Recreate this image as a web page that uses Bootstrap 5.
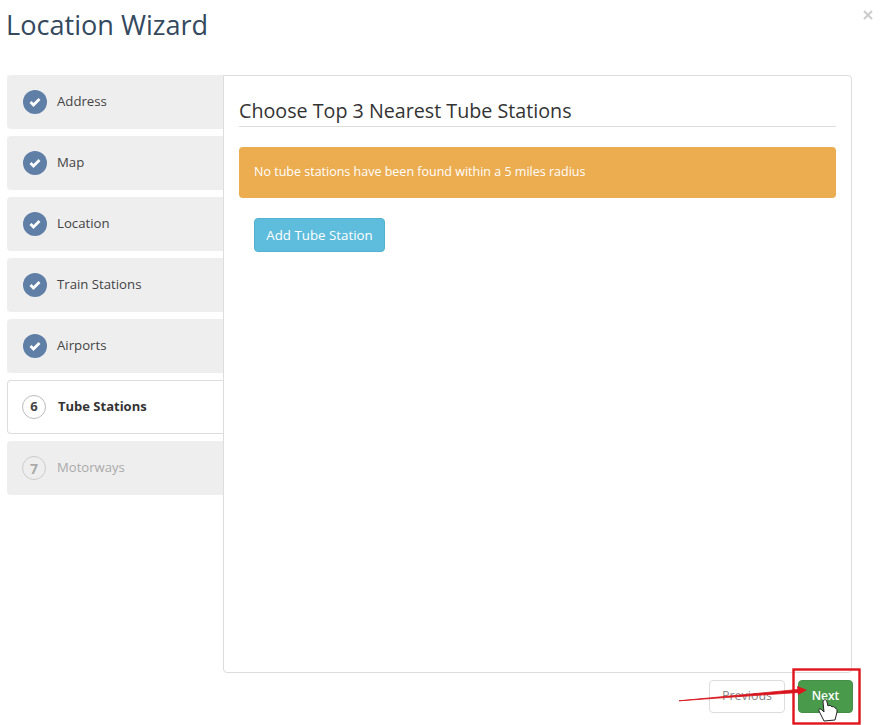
<!DOCTYPE html>
<html lang="en">
<head>
<meta charset="utf-8">
<title>Location Wizard</title>
<link href="https://cdn.jsdelivr.net/npm/bootstrap@5.3.0/dist/css/bootstrap.min.css" rel="stylesheet">
<style>
html,body{height:725px;overflow:hidden;background:#fff}
body{font-family:"Open Sans","Noto Sans",sans-serif;color:#333;font-size:13px;position:relative}
.wiz-page{padding:0 29px 0 7px;width:881px}
.wiz-head{height:75px;padding-top:7px}
.wiz-title{font-size:27.1px;font-weight:400;color:#34495e;margin:0 0 0 -1px;line-height:36px}
.wiz-close{position:absolute;left:862px;top:9px;width:12px;height:12px}
.wiz-body{height:598px}
.wiz-steps{width:216px;flex:none;gap:7px}
.wiz-step{height:54px;background:#eee;border-radius:4px 0 0 4px;padding-left:16px;gap:10px;font-size:13.2px;color:#444}
.wiz-label{padding-bottom:1px}
.wiz-step.is-current{background:#fff;border:1px solid #ddd;border-right:0;font-weight:700;color:#333;padding-left:14px;gap:12px;font-size:13px}
.wiz-step.is-current .wiz-label{padding-bottom:0}
.wiz-step.is-off{color:#aaa;padding-left:15px;gap:11px;font-size:13.1px}
.wiz-dot{width:24px;height:24px;border-radius:50%;background:#5f7fa6;flex:none}
.wiz-num{background:#fff;border:1px solid #bbb;font-size:13px;font-weight:700;color:#444}
.is-off .wiz-num{background:transparent;border-color:#ccc;color:#aaa;font-size:14px}
.wiz-panel{width:629px;flex:none;border:1px solid #ddd;border-radius:0 4px 4px 4px;padding:20px 15px 0}
.wiz-h{font-size:19.7px;font-weight:400;color:#333;margin:0;line-height:30px;border-bottom:1px solid #ddd;height:31px}
.wiz-alert{margin:20px 0 20px;height:51px;background:#ecac50;color:#fff;border:0;border-radius:4px;padding:0 15px 1px;font-size:12.5px}
.wiz-add{margin-left:15px;height:34px;width:131px;background:#5ebcdc;border:1px solid #53b0d0;color:#fff;font-size:13.3px;padding:1px 0 0;border-radius:4px}
.wiz-foot{height:52px;padding-top:7px;gap:13px;margin-right:-1px}
.wiz-prev{width:76px;height:33px;padding:0 0 1px;background:#fff;border:1px solid #ddd;color:#888;font-size:12.5px;border-radius:4px}
.wiz-next{width:55px;height:33px;padding:0 0 1px;background:#4a9a4c;border:1px solid #468f48;color:#fff;font-size:12px;font-weight:600;border-radius:4px}
.wiz-overlay{position:absolute;left:0;top:0;pointer-events:none}
</style>
</head>
<body>
<div class="wiz-page">
  <div class="wiz-head"><h1 class="wiz-title">Location Wizard</h1></div>
  <svg class="wiz-close" viewBox="0 0 12 12"><path d="M2 2l8 8M10 2l-8 8" stroke="#ccc" stroke-width="2"/></svg>
  <div class="wiz-body d-flex">
    <div class="wiz-steps d-flex flex-column">
      <div class="wiz-step d-flex align-items-center"><span class="wiz-dot d-flex align-items-center justify-content-center"><svg width="14" height="12" viewBox="0 0 14 12"><path d="M2.5 6l3 3 6-6" fill="none" stroke="#fff" stroke-width="2.8"/></svg></span><span class="wiz-label">Address</span></div>
      <div class="wiz-step d-flex align-items-center"><span class="wiz-dot d-flex align-items-center justify-content-center"><svg width="14" height="12" viewBox="0 0 14 12"><path d="M2.5 6l3 3 6-6" fill="none" stroke="#fff" stroke-width="2.8"/></svg></span><span class="wiz-label">Map</span></div>
      <div class="wiz-step d-flex align-items-center"><span class="wiz-dot d-flex align-items-center justify-content-center"><svg width="14" height="12" viewBox="0 0 14 12"><path d="M2.5 6l3 3 6-6" fill="none" stroke="#fff" stroke-width="2.8"/></svg></span><span class="wiz-label">Location</span></div>
      <div class="wiz-step d-flex align-items-center"><span class="wiz-dot d-flex align-items-center justify-content-center"><svg width="14" height="12" viewBox="0 0 14 12"><path d="M2.5 6l3 3 6-6" fill="none" stroke="#fff" stroke-width="2.8"/></svg></span><span class="wiz-label">Train Stations</span></div>
      <div class="wiz-step d-flex align-items-center"><span class="wiz-dot d-flex align-items-center justify-content-center"><svg width="14" height="12" viewBox="0 0 14 12"><path d="M2.5 6l3 3 6-6" fill="none" stroke="#fff" stroke-width="2.8"/></svg></span><span class="wiz-label">Airports</span></div>
      <div class="wiz-step is-current d-flex align-items-center"><span class="wiz-dot wiz-num d-flex align-items-center justify-content-center">6</span><span class="wiz-label">Tube Stations</span></div>
      <div class="wiz-step is-off d-flex align-items-center"><span class="wiz-dot wiz-num d-flex align-items-center justify-content-center">7</span><span class="wiz-label">Motorways</span></div>
    </div>
    <div class="wiz-panel">
      <h2 class="wiz-h">Choose Top 3 Nearest Tube Stations</h2>
      <div class="alert wiz-alert d-flex align-items-center">No tube stations have been found within a 5 miles radius</div>
      <button type="button" class="btn wiz-add">Add Tube Station</button>
    </div>
  </div>
  <div class="wiz-foot d-flex justify-content-end">
    <button type="button" class="btn wiz-prev">Previous</button>
    <button type="button" class="btn wiz-next">Next</button>
  </div>
</div>
<svg class="wiz-overlay" width="881" height="725" viewBox="0 0 881 725">
  <rect x="793.5" y="669.5" width="66" height="54" fill="none" stroke="#e0141c" stroke-width="2.4"/>
  <path d="M679 700.8L798 689.5L798 692.5Z" fill="#d8141c" stroke="#d8141c" stroke-width=".8"/>
  <path d="M797 686L807 690L798 695Z" fill="#e0141c"/>
  <path d="M824 721L819 711C818 709 820 708 822 710L824 712L823 702C823 699 827 699 827 702L828 706C829 705 831 705 832 707C833 706 835 707 835 708C837 708 837 710 837 712L835 720Z" fill="#fff" stroke="#222" stroke-width="1"/>
</svg>
</body>
</html>
